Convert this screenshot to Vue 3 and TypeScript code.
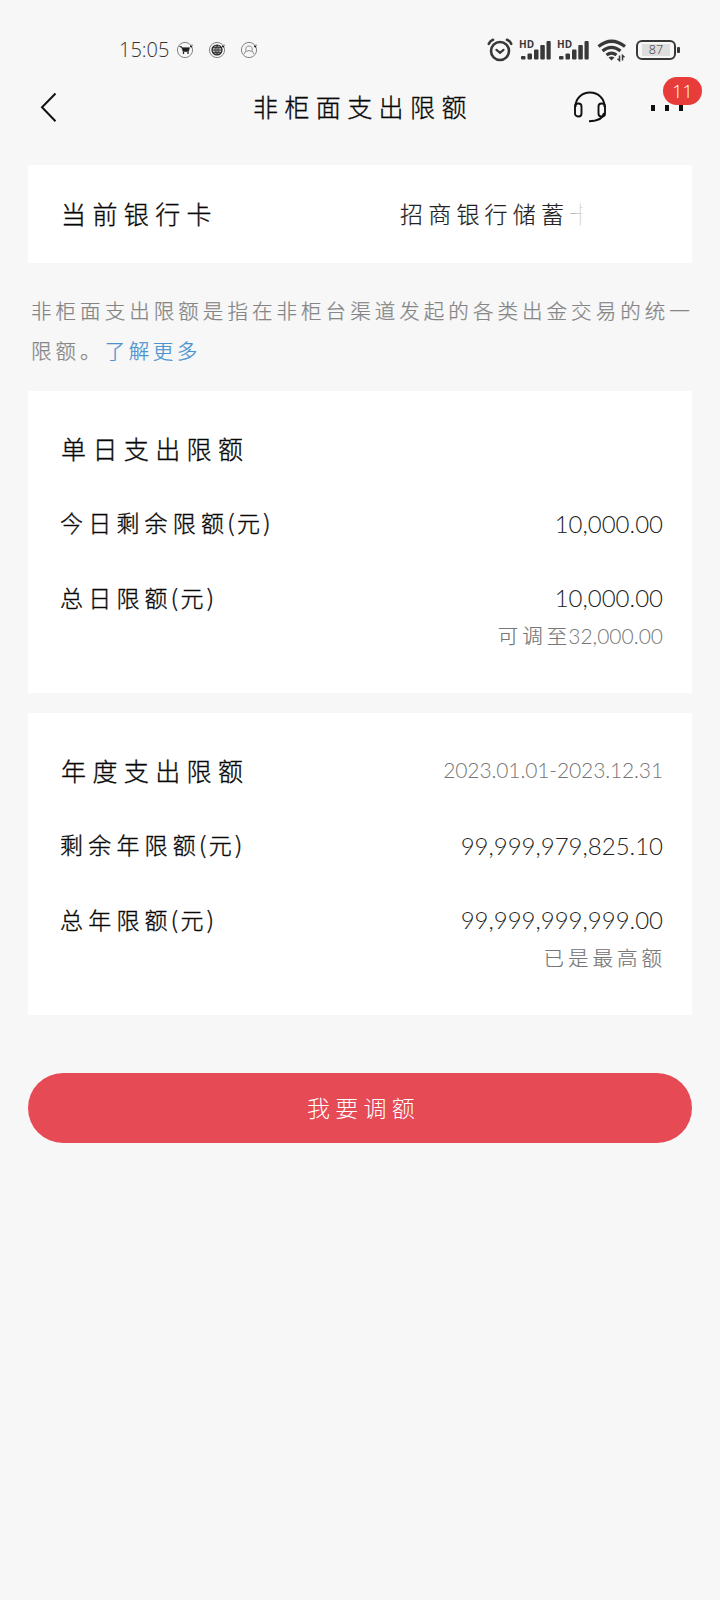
<script setup lang="ts">
interface LimitRow {
  name: string
  value: string
  note?: string
}

interface LimitCard {
  title: string
  period?: string
  rows: LimitRow[]
}

const cards: LimitCard[] = [
  {
    title: '单日支出限额',
    rows: [
      { name: '今日剩余限额', value: '10,000.00' },
      { name: '总日限额', value: '10,000.00', note: '可调至32,000.00' },
    ],
  },
  {
    title: '年度支出限额',
    period: '2023.01.01-2023.12.31',
    rows: [
      { name: '剩余年限额', value: '99,999,979,825.10' },
      { name: '总年限额', value: '99,999,999,999.00', note: '已是最高额' },
    ],
  },
]

const splitNote = (note: string) => {
  const at = note.search(/\d/)
  return at < 0 ? [note, ''] : [note.slice(0, at), note.slice(at)]
}
</script>

<template>
  <div class="screen">
    <header class="status">
      <span class="time">15:05</span>
      <div class="notices">
        <svg width="20" height="20" viewBox="0 0 20 20">
          <circle cx="9" cy="10" r="7.6" class="ring" />
          <path d="M3.500 6.500h2l1.500 5h5.500l1-3.800H6z" fill="#222" stroke="#222" stroke-width=".6" />
          <path d="M7.500 12v2M12 12v2" stroke="#222" stroke-width="1.300" />
          <path d="M14.500 7l2-2" class="tick" />
        </svg>
        <svg width="20" height="20" viewBox="0 0 20 20">
          <circle cx="9" cy="10" r="7.600" class="ring" />
          <circle cx="9" cy="10" r="5" fill="#bbb" stroke="#222" stroke-width="1.200" />
          <path d="M4 10h10M9 5v10M5 7.500h8M5 12.500h8M9 5q-4 5 0 10M9 5q4 5 0 10" fill="none" stroke="#222" stroke-width=".7" />
          <path d="M14.500 7l2-2" class="tick" />
        </svg>
        <svg width="20" height="20" viewBox="0 0 20 20">
          <circle cx="9" cy="10" r="7.600" class="ring" />
          <path d="M4 14l2-3q-1-5 3-5t3 5l2 3M6.500 11.500q2.500-2 5 0" fill="none" stroke="#888" stroke-width="1" />
          <path d="M14.500 7l2-2" class="tick" />
        </svg>
      </div>
      <div class="system">
        <svg class="alarm" width="26" height="24" viewBox="0 0 26 24" fill="none" stroke="#383838" stroke-linecap="round">
          <circle cx="13" cy="13" r="9" stroke-width="2.600" />
          <path d="M9.500 11.800l3.500 3 3.500-3" stroke-width="2.200" />
          <path d="M1.800 5.800Q3 3 6 1.800M24.200 5.800Q23 3 20 1.800" stroke-width="2.600" />
        </svg>
        <div v-for="n in 2" :key="n" class="signal">
          <span class="hd">HD</span>
          <svg width="31" height="20" viewBox="0 0 31 20" fill="#383838">
            <rect x="1" y="16" width="4.500" height="3.500" rx="1" />
            <rect x="7.500" y="13.500" width="4.500" height="6" rx="1" />
            <rect x="14" y="9.500" width="4.500" height="10" rx="1" />
            <rect x="20.300" y="5" width="4.500" height="14.500" rx="1" />
            <rect x="26.500" y="1" width="4.200" height="18.500" rx="1" />
          </svg>
        </div>
        <svg class="wifi" width="30" height="24" viewBox="0 0 30 24" fill="none" stroke="#383838">
          <path d="M1.500 8.500q13-10.500 26.500 0M5.500 13q9-7.200 18 0M9.500 17q5-3.800 10 0" stroke-width="3.200" />
          <path d="M11.500 19.500q3-2 6 0l-3 3z" fill="#383838" stroke="none" />
          <path d="M22.500 17.500v5l-2-1.800M25.500 22.500v-5l2 1.800" stroke-width="1.500" />
        </svg>
        <div class="battery"><span>87</span></div>
      </div>
    </header>

    <nav class="nav">
      <svg class="back" width="20" height="32" viewBox="0 0 20 32">
        <path d="M16.500 1.500L3 15.300l13.500 14" fill="none" stroke="#111" stroke-width="2" />
      </svg>
      <h1>非柜面支出限额</h1>
      <svg class="headset" width="34" height="34" viewBox="0 0 34 34" fill="none" stroke="#111" stroke-width="1.900">
        <path d="M2.500 16v-1a14.500 13.500 0 0 1 29 0v1M31 22q-1.500 8-15 8.200" />
        <rect x="2" y="12.500" width="6.500" height="13" rx="3" />
        <rect x="25.500" y="12.500" width="6.500" height="13" rx="3" />
      </svg>
      <div class="more">
        <i></i><i></i><i></i>
        <span class="badge">11</span>
      </div>
    </nav>

    <main>
      <section class="card account">
        <span class="heading">当前银行卡</span>
        <span class="bank">招商银行储蓄<span class="faded">卡</span></span>
      </section>

      <p class="intro">非柜面支出限额是指在非柜台渠道发起的各类出金交易的统一限额。<a>了解更多</a></p>

      <section v-for="card in cards" :key="card.title" class="card limits">
        <div class="row">
          <h2 class="heading">{{ card.title }}</h2>
          <span v-if="card.period" class="period">{{ card.period }}</span>
        </div>
        <template v-for="row in card.rows" :key="row.name">
          <div class="row">
            <span class="label">{{ row.name }}<span class="paren">(</span>元<span class="paren close">)</span></span>
            <span class="value">{{ row.value }}</span>
          </div>
          <div v-if="row.note" class="note">
            <span class="han">{{ splitNote(row.note)[0] }}</span>
            <span v-if="splitNote(row.note)[1]" class="num">{{ splitNote(row.note)[1] }}</span>
          </div>
        </template>
      </section>

      <button class="adjust">我要调额</button>
    </main>
  </div>
</template>

<style>
body {
  margin: 0;
  background: #f7f7f7;
}
</style>

<style scoped>
.screen {
  box-sizing: border-box;
  width: 720px;
  height: 1600px;
  overflow: hidden;
  background: #f7f7f7;
  color: #080808;
  font-family: "Noto Sans CJK SC", sans-serif;
  font-weight: 300;
}

svg {
  display: block;
  flex: none;
}

.status {
  display: flex;
  align-items: center;
  height: 70px;
  padding: 30px 40px 0 119px;
  box-sizing: border-box;
}

.time {
  width: 57px;
  font: 300 20px/40px "Open Sans", sans-serif;
  color: #333;
}

.notices {
  display: flex;
  gap: 12px;
}

.ring {
  fill: none;
  stroke: #777;
  stroke-width: 0.9;
}

.tick {
  stroke: #111;
  stroke-width: 2;
  stroke-dasharray: 1.500 1;
}

.system {
  display: flex;
  align-items: center;
  margin-left: auto;
}

.alarm {
  margin-right: 7px;
}

.signal {
  position: relative;
  margin-right: 7px;
}

.hd {
  position: absolute;
  left: -1px;
  top: -1px;
  font: 700 10px/10px "Open Sans", sans-serif;
  color: #383838;
}

.wifi {
  margin: 0 9px 0 1px;
}

.battery {
  position: relative;
  box-sizing: border-box;
  width: 40px;
  height: 20px;
  margin-right: 4px;
  padding: 2px 3px;
  border: 2px solid #383838;
  border-radius: 6px;
}

.battery::after {
  content: "";
  position: absolute;
  left: 39px;
  top: 5px;
  width: 3px;
  height: 6px;
  border-radius: 1px;
  background: #383838;
}

.battery span {
  display: block;
  width: 28px;
  margin-left: 1px;
  background: #dedede;
  font: 300 12.500px/12px "Open Sans", sans-serif;
  color: #333;
  text-align: center;
}

.nav {
  display: flex;
  align-items: center;
  height: 75px;
  padding: 0 37px 0 39px;
}

.nav h1 {
  width: 219px;
  margin: -3px 0 0 191px;
  padding-left: 3px;
  font-size: 25px;
  font-weight: 300;
  line-height: 40px;
  letter-spacing: 6.400px;
  white-space: nowrap;
}

.nav h1,
.heading,
.label {
  -webkit-text-stroke: 0.350px #080808;
}

.headset {
  margin-left: 101px;
}

.more {
  position: relative;
  display: flex;
  gap: 10px;
  margin: 1px 0 0 44px;
}

.more i {
  width: 4px;
  height: 6px;
  background: #111;
}

.badge {
  position: absolute;
  left: 12px;
  top: -28px;
  width: 39px;
  height: 28px;
  border-radius: 14px;
  background: #e83c3a;
  color: #fff;
  font: 300 18px/29px "Open Sans", sans-serif;
  text-align: center;
}

main {
  display: flex;
  flex-direction: column;
  padding: 20px 28px 0;
}

.card {
  background: #fff;
}

.account {
  display: flex;
  align-items: center;
  height: 98px;
  padding: 0 0 3px 33px;
  box-sizing: border-box;
}

.heading {
  margin: 0;
  font-size: 25px;
  font-weight: 300;
  line-height: 40px;
  letter-spacing: 6.400px;
}

.bank {
  margin-left: 182px;
  font-size: 23px;
  letter-spacing: 5.200px;
  color: #222;
  -webkit-text-stroke: 0.200px #222;
}

.faded {
  background: linear-gradient(90deg, #aaa 0%, #ddd 45%, #fff 52%);
  background-clip: text;
  -webkit-background-clip: text;
  color: transparent;
  -webkit-text-stroke: 0;
}

.intro {
  width: 668px;
  height: 128px;
  margin: 0;
  padding: 28px 0 0 3px;
  box-sizing: border-box;
  font-size: 20.500px;
  line-height: 39.500px;
  letter-spacing: 4.050px;
  color: #858585;
  -webkit-text-stroke: 0.250px currentColor;
  word-break: break-all;
}

.intro a {
  color: #4b92cf;
  letter-spacing: 3.500px;
}

.limits {
  height: 302px;
  margin-bottom: 20px;
  padding: 21px 29px 0 33px;
  box-sizing: border-box;
}

.row {
  display: flex;
  align-items: center;
  justify-content: space-between;
  height: 74.600px;
}

.row h2 {
  margin-top: -2px;
  white-space: nowrap;
}

.label {
  margin: -3px 0 0 -1px;
  font-size: 23px;
  letter-spacing: 5.200px;
}

.paren {
  margin-left: -2px;
  letter-spacing: 2.500px;
}

.paren.close {
  margin-left: -2px;
}

.value {
  font: 300 24px/40px Lato, sans-serif;
  font-kerning: none;
  color: #222;
}

.period {
  margin-top: -2px;
  font: 300 21px/40px Lato, sans-serif;
  letter-spacing: -0.120px;
  color: #777;
}

.note {
  display: flex;
  justify-content: flex-end;
  margin-top: -19px;
  line-height: 36px;
  color: #777;
}

.note .han {
  margin-right: -3px;
  font-size: 20.500px;
  letter-spacing: 4px;
  -webkit-text-stroke: 0.200px currentColor;
}

.note .num {
  font: 300 21px/38px Lato, sans-serif;
}

.adjust {
  height: 70px;
  margin-top: 38px;
  padding: 0 0 3px 7px;
  border: 0;
  border-radius: 35px;
  background: #e54a55;
  color: #fff;
  font: inherit;
  font-size: 23px;
  letter-spacing: 5.300px;
}
</style>
